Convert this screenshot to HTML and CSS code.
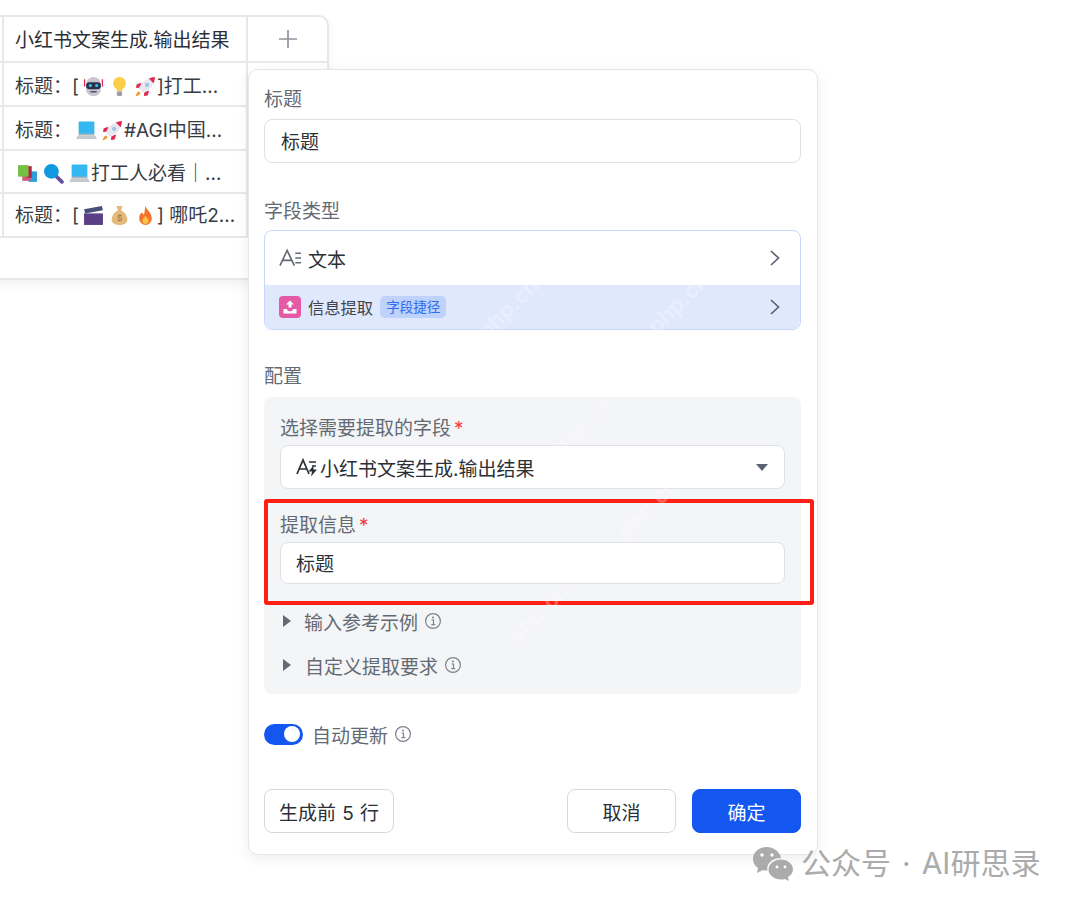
FILE: index.html
```html
<!DOCTYPE html>
<html lang="zh">
<head>
<meta charset="utf-8">
<title>信息提取</title>
<link rel="stylesheet" href="styles.css">
</head>
<body>
<svg class="defs" width="0" height="0" aria-hidden="true">
  <defs>
    <symbol id="rocket" viewBox="0 0 20 20">
      <path d="M3.500 14.500C2 15.500.8 18 .5 19.500 2 19.200 4.500 18 5.500 16.500z" fill="#f59331"/>
      <path d="M6 6.500L1.500 8 1 11.500l4.500-.5zM13.500 14L12 18.500 8.500 19l.5-4.500z" fill="#e0274e"/>
      <path d="M3.800 12.200C5 7 10 1.800 19 1c-.8 9-6 14-11.200 15.200z" fill="#e9e7ef"/>
      <path d="M13.200 2.300C15 1.500 17 1.200 19 1c-.2 2-.5 4-1.300 5.800z" fill="#e0274e"/>
      <circle cx="11.500" cy="8.500" r="2" fill="#9cc3e6"/>
    </symbol>
    <symbol id="laptop" viewBox="0 0 20 20">
      <rect x="2.500" y="1.500" width="15" height="12" rx=".8" fill="#35b8f2"/>
      <rect x="2.500" y="13" width="15" height="1.500" fill="#aeb4bb"/>
      <path d="M2 14.500h16l2 3.500H0z" fill="#c5cace"/>
    </symbol>
    <symbol id="info" viewBox="0 0 18 18">
      <circle cx="9" cy="9" r="7.400" fill="none" stroke="currentColor" stroke-width="1.200"/>
      <path d="M7.500 8h2v4.500M7.300 12.700h4" fill="none" stroke="currentColor" stroke-width="1.200"/>
      <circle cx="9" cy="5.600" r="1" fill="currentColor"/>
    </symbol>
    <symbol id="chev" viewBox="0 0 12 18">
      <path d="M2 2l7.500 7L2 16" fill="none" stroke="#5b6270" stroke-width="1.700"/>
    </symbol>
    <symbol id="tri" viewBox="0 0 10 14">
      <path d="M1 1l8 6-8 6z" fill="#646a73"/>
    </symbol>
  </defs>
</svg>

<section class="table">
  <div class="tr head">
    <div class="stub"></div>
    <div class="name">小红书文案生成.输出结果</div>
    <div class="add">
      <svg width="20" height="20" viewBox="0 0 20 20"><path d="M10 1v18M1 10h18" stroke="#8f959e" stroke-width="1.700" fill="none"/></svg>
    </div>
  </div>
  <div class="tr r1">
    <div class="stub"></div>
    <div class="name"><p class="cell">标题：[<svg class="emoji" viewBox="0 0 20 20"><path d="M1.500 3v7M18.500 3v7" stroke="#e0274e" stroke-width="1.200"/><path d="M3 8a7 7 0 0 1 14 0v5a6 6 0 0 1-6 6H9a6 6 0 0 1-6-6z" fill="#c9c3d2"/><rect x="3" y="6" width="14" height="6.500" rx="3" fill="#27324a"/><circle cx="7" cy="9" r="1.500" fill="#3cc4f2"/><circle cx="13" cy="9" r="1.500" fill="#3cc4f2"/><path d="M7 15h6" stroke="#5a5468" stroke-width="1.500"/></svg><svg class="emoji" viewBox="0 0 20 20"><path d="M10 1a6 6 0 0 0-3.300 11c.5.500.7 1.500.7 2.500h5.200c0-1 .2-2 .7-2.500A6 6 0 0 0 10 1z" fill="#fbcf4a"/><rect x="7.500" y="14.500" width="5" height="4.500" rx="1.500" fill="#9a9fa8"/></svg><svg class="emoji"><use href="#rocket"/></svg>]打工…</p></div>
  </div>
  <div class="tr r2">
    <div class="stub"></div>
    <div class="name"><p class="cell">标题：<svg class="emoji"><use href="#laptop"/></svg><svg class="emoji"><use href="#rocket"/></svg>#AGI中国…</p></div>
  </div>
  <div class="tr r3">
    <div class="stub"></div>
    <div class="name"><p class="cell"><svg class="emoji" viewBox="0 0 20 20"><rect x="11" y="8" width="8" height="10" fill="#2a9fdc"/><rect x="5" y="11" width="8" height="6" fill="#d45a7a"/><rect x="9" y="3" width="5" height="11" fill="#b5234a"/><rect x="1" y="2" width="10" height="11" fill="#76c043"/></svg><svg class="emoji" viewBox="0 0 20 20"><path d="M12 12l6 6" stroke="#6a4ea0" stroke-width="3.500" stroke-linecap="round"/><circle cx="8" cy="8" r="7" fill="#0f9adf"/></svg><svg class="emoji"><use href="#laptop"/></svg>打工人必看｜…</p></div>
  </div>
  <div class="tr r4">
    <div class="stub"></div>
    <div class="name"><p class="cell">标题：[<svg class="emoji" viewBox="0 0 20 20"><path d="M1 8h18v11H1z" fill="#5b3f86"/><path d="M1 4l17-3 1 4L2 8z" fill="#47507a"/></svg><svg class="emoji" viewBox="0 0 20 20"><path d="M7 1h6l-1.500 4c4 2 6 6 6 9 0 3-3 5-7.500 5s-7.500-2-7.500-5c0-3 2-7 6-9z" fill="#e3b97c"/><text x="10" y="15" class="dollar">$</text></svg><svg class="emoji" viewBox="0 0 20 20"><path d="M10 1c1 4 6 6 6 12a6 6 0 0 1-12 0c0-3 1-5 3-6 0 2 1 2 1.500 2C9.500 7 9 4 10 1z" fill="#f4722b"/><path d="M10 10c1 2 3 3 3 5a3 3 0 0 1-6 0c0-2 2-3 3-5z" fill="#fbc14a"/></svg>] 哪吒2…</p></div>
  </div>
</section>

<main class="card">
  <h2 class="label first">标题</h2>
  <div class="input">标题</div>

  <h2 class="label type">字段类型</h2>
  <div class="typebox">
    <div class="typerow">
      <span class="left">
        <svg class="aicon" viewBox="0 0 24 20"><path d="M1 18L8.500 2 16 18M4 12.500h9" fill="none" stroke="#646a73" stroke-width="1.700"/><path d="M17 5h6M17 10h6M17 15h6" stroke="#646a73" stroke-width="1.600"/></svg>
        文本
      </span>
      <svg class="chev"><use href="#chev"/></svg>
    </div>
    <div class="typerow blue">
      <span class="left small">
        <svg class="badge" viewBox="0 0 22 22"><rect width="22" height="22" rx="4" fill="#e45aa5"/><path d="M11 4.500l4 4h-2.500v3h-3v-3H7zM4.500 13H8c0 1.500 1.500 2.300 3 2.300s3-.8 3-2.300h3.500v4.500h-13z" fill="#fff"/></svg>
        信息提取
        <span class="tag">字段捷径</span>
      </span>
      <svg class="chev"><use href="#chev"/></svg>
    </div>
  </div>

  <h2 class="label cfg">配置</h2>
  <div class="panel">
    <div class="flabel">选择需要提取的字段<span class="req">*</span></div>
    <div class="select">
      <span class="left">
        <svg class="aicon2" viewBox="0 0 22 20"><path d="M1 17L7 3l6 14M3.500 12h7" fill="none" stroke="#2b2f36" stroke-width="1.700"/><path d="M13 5h7M16 9h4" stroke="#2b2f36" stroke-width="1.500"/><path d="M17.500 8.500L12.500 14.500h3.500l-1 5 6-7h-3.500z" fill="#2b2f36"/></svg>
        小红书文案生成.输出结果
      </span>
      <span class="caret"></span>
    </div>
    <div class="flabel second">提取信息<span class="req">*</span></div>
    <div class="input inner">标题</div>
    <div class="disclose d1"><svg class="tri"><use href="#tri"/></svg>输入参考示例<svg class="info"><use href="#info"/></svg></div>
    <div class="disclose d2"><svg class="tri"><use href="#tri"/></svg>自定义提取要求<svg class="info"><use href="#info"/></svg></div>
  </div>

  <div class="auto">
    <span class="toggle"><span class="knob"></span></span>
    自动更新<svg class="info"><use href="#info"/></svg>
  </div>

  <footer class="foot">
    <button class="btn gen">生成前 5 行</button>
    <span class="actions">
      <button class="btn cancel">取消</button>
      <button class="btn ok">确定</button>
    </span>
  </footer>
</main>

<div class="redbox"></div>

<span class="wm w1">php.cn</span>
<span class="wm w2">php.cn</span>
<span class="wm w3">php.cn</span>
<span class="wm w4">php.cn</span>
<span class="wm w5">php.cn</span>

<div class="mark">
  <svg class="wechat" viewBox="0 0 42 35">
    <path d="M15 1C7 1 1 6 1 13c0 4 2 7 5 9l-1 5 6-3c1.500.4 3 .6 4.500.5C14 18 20 12 29 12c-1-6-7-11-14-11z" fill="#ababab"/>
    <path d="M29 13.500c-7 0-12.500 4.500-12.500 10s5.500 10 12.500 10c1.500 0 2.500-.2 4-.6l4 2.100-1-4c3-2 5-4.500 5-7.500 0-5.500-5.500-10-12-10z" fill="#ababab"/>
    <circle cx="10" cy="9" r="1.700" fill="#fff"/><circle cx="20" cy="9" r="1.700" fill="#fff"/>
    <circle cx="25" cy="21" r="1.400" fill="#fff"/><circle cx="33" cy="21" r="1.400" fill="#fff"/>
  </svg>
  <span>公众号<span class="dot">·</span>AI研思录</span>
</div>
</body>
</html>
```
FILE: styles.css
```css
* { box-sizing: border-box; }
html, body { margin: 0; padding: 0; }
body {
  width: 1080px;
  height: 908px;
  position: relative;
  overflow: hidden;
  background: #fff;
  font-family: "Inter", "Noto Sans CJK SC", sans-serif;
  font-size: 19px;
  color: #2b2f36;
}
.defs { position: absolute; }

/* table behind the popup */
.table {
  position: absolute;
  left: -10px;
  top: 15px;
  width: 339px;
  height: 265px;
  border: 2px solid #e6e8eb;
  border-radius: 0 10px 0 0;
  box-shadow: 0 6px 12px rgba(0,0,0,.05);
  background: #fff;
}
.tr {
  display: flex;
  align-items: center;
  border-bottom: 2px solid #e6e8eb;
  white-space: nowrap;
}
.head { height: 46px; }
.r1 { height: 44px; }
.r2 { height: 44px; }
.r3 { height: 43px; }
.r4 { height: 44px; }
.stub { width: 12px; height: 100%; border-right: 2px solid #e6e8eb; flex: none; }
.name {
  width: 244px;
  flex: none;
  height: 100%;
  display: flex;
  align-items: center;
  padding-left: 11px;
  border-right: 2px solid #e6e8eb;
  color: #373c43;
  overflow: hidden;
}
.head .name { color: #2b2f36; padding-bottom: 1px; }
.r3 .name { padding-bottom: 1px; }
.r4 .name { padding-bottom: 3px; }
.cell { margin: 0; white-space: nowrap; }
.r3 .cell { margin-left: -2px; }
.add { flex: 1; display: flex; align-items: center; justify-content: center; }
.emoji { width: 21px; height: 21px; margin: 0 1px 0 4px; vertical-align: -4px; }
.dollar { font-size: 9px; fill: #a8743a; text-anchor: middle; font-family: "Liberation Sans", sans-serif; }

/* popup */
.card {
  position: absolute;
  left: 248px;
  top: 69px;
  width: 570px;
  height: 786px;
  padding: 0 16px 0 15px;
  background: #fff;
  border: 1px solid #e4e6e9;
  border-radius: 10px;
  box-shadow: 0 4px 14px rgba(0,0,0,.07);
}
.label {
  margin: 0;
  height: 28px;
  padding-top: 2px;
  font-weight: 400;
  font-size: 19px;
  line-height: 28px;
  color: #646a73;
}
.label.first { margin-top: 14px; }
.label.type { margin-top: 33px; }
.label.cfg { margin-top: 32px; padding-top: 1px; }
.input {
  height: 44px;
  margin-top: 7px;
  border: 1px solid #dfe1e5;
  border-radius: 8px;
  background: #fff;
  display: flex;
  align-items: center;
  padding: 0 0 2px 16px;
  color: #2b2f36;
}
.typebox {
  margin-top: 6px;
  height: 100px;
  border: 1px solid #c8d8fb;
  border-radius: 8px;
  overflow: hidden;
}
.typerow {
  display: flex;
  align-items: center;
  justify-content: space-between;
  height: 54px;
  padding: 0 19px 0 14px;
}
.typerow.blue { height: 44px; background: #e0e8fd; }
.left { display: flex; align-items: center; }
.left.small { font-size: 16.300px; color: #3f444b; }
.aicon { width: 23px; height: 20px; margin-right: 6px; }
.badge { width: 22px; height: 22px; margin-right: 7px; }
.tag {
  margin-left: 7px;
  padding: 0 6px;
  height: 22px;
  line-height: 22px;
  font-size: 13.500px;
  color: #2f6bf0;
  background: #bed2fb;
  border-radius: 5px;
}
.chev { width: 12px; height: 18px; }
.panel {
  margin-top: 7px;
  height: 297px;
  padding: 16px 16px 0;
  background: #f4f5f7;
  border-radius: 8px;
}
.flabel { height: 28px; padding-top: 2px; line-height: 28px; color: #646a73; }
.flabel.second { margin-top: 21px; }
.req { color: #f23a3a; margin-left: 3px; }
.select {
  height: 44px;
  margin-top: 4px;
  display: flex;
  align-items: center;
  justify-content: space-between;
  padding: 0 16px 0 15px;
  border: 1px solid #dfe1e5;
  border-radius: 8px;
  background: #fff;
}
.aicon2 { width: 22px; height: 20px; margin-right: 2px; }
.caret {
  width: 0;
  height: 0;
  border-left: 6px solid transparent;
  border-right: 6px solid transparent;
  border-top: 7px solid #5b6270;
}
.input.inner { margin-top: 4px; height: 42px; padding-left: 15px; }
.disclose {
  display: flex;
  align-items: center;
  height: 28px;
  color: #646a73;
}
.d1 { margin-top: 23px; }
.d2 { margin-top: 16px; }
.tri { width: 10px; height: 14px; margin: 0 12px 0 2px; }
.d2 .tri { margin-right: 13px; }
.info { width: 18px; height: 18px; margin-left: 6px; color: #7d838c; }
.auto {
  display: flex;
  align-items: center;
  height: 28px;
  margin-top: 26px;
  color: #646a73;
}
.toggle {
  width: 39px;
  height: 21px;
  border-radius: 11px;
  background: #1456f0;
  margin-right: 9px;
  display: flex;
  align-items: center;
  justify-content: flex-end;
  padding-right: 3px;
}
.knob { width: 16px; height: 16px; border-radius: 50%; background: #fff; }
.foot {
  display: flex;
  justify-content: space-between;
  margin-top: 41px;
}
.actions { display: flex; gap: 16px; }
.btn {
  height: 44px;
  border-radius: 8px;
  border: 1px solid #d6d9dd;
  background: #fff;
  font: inherit;
  color: #2b2f36;
  padding: 0;
}
.gen { width: 130px; word-spacing: 1px; }
.cancel { width: 109px; }
.ok { width: 109px; background: #1456f0; border-color: #1456f0; color: #fff; }

/* annotation overlay */
.redbox {
  position: absolute;
  left: 264px;
  top: 499px;
  width: 550px;
  height: 106px;
  border: 4.500px solid #ff1f14;
  border-radius: 3px;
}

/* faint image watermarks */
.wm {
  position: absolute;
  font-size: 22px;
  font-weight: 700;
  color: rgba(255,255,255,.3);
  transform: rotate(-45deg);
}
.w1 { left: 470px; top: 295px; }
.w2 { left: 640px; top: 290px; }
.w3 { left: 540px; top: 415px; }
.w4 { left: 610px; top: 495px; }
.w5 { left: 500px; top: 600px; }

/* account mark */
.mark {
  position: absolute;
  left: 752px;
  top: 843px;
  display: flex;
  align-items: center;
  gap: 7px;
  color: #ababab;
  font-size: 30px;
  line-height: 40px;
  white-space: nowrap;
}
.dot { margin: 0 11px; }
.wechat { width: 42px; height: 35px; }
```
